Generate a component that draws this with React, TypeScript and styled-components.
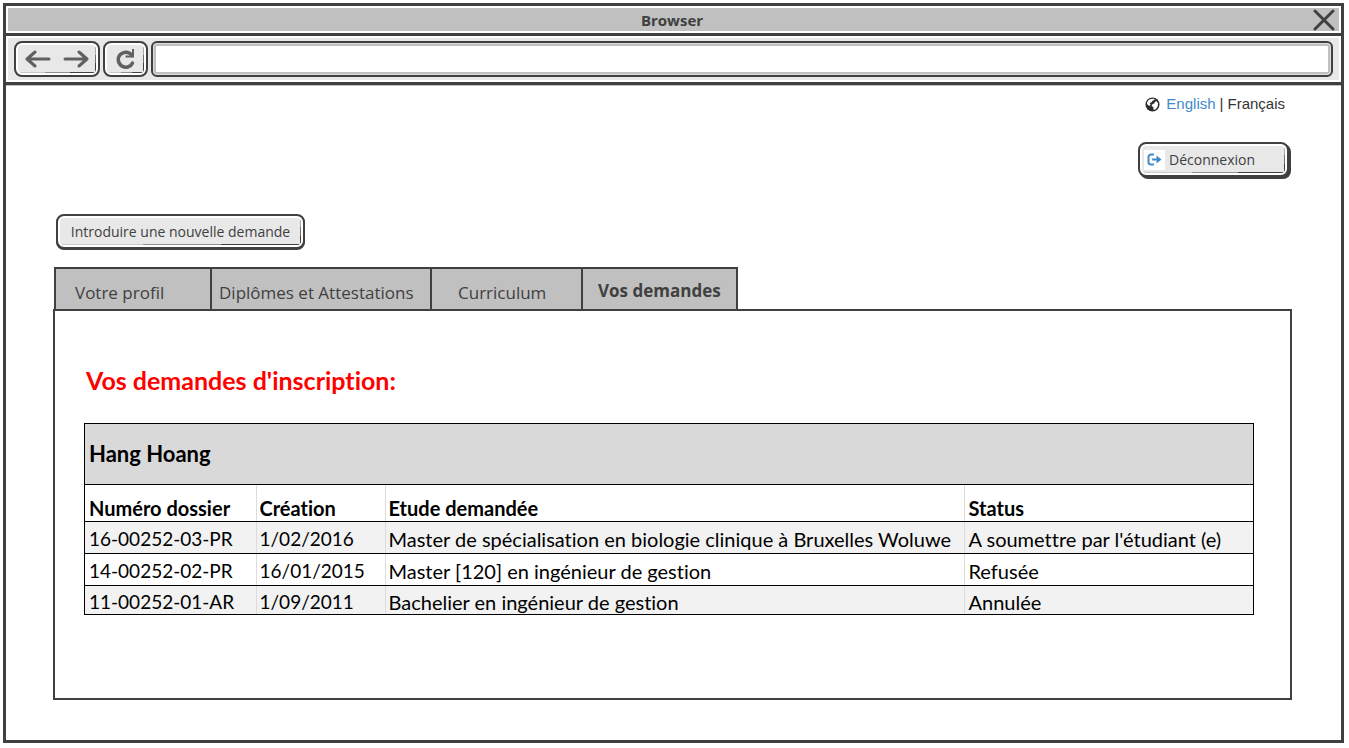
import React from "react";
import styled, { createGlobalStyle, css } from "styled-components";

const ink = "#404040";
const silver = "#c0c0c0";
const face = "#e8e8e8";
const sketchFont = `"Open Sans", "Noto Sans", sans-serif`;
const sheetFont = `Lato, "Open Sans", sans-serif`;

const GlobalStyle = createGlobalStyle`
  *, *::before, *::after { box-sizing: border-box; }
  body { margin: 0; background: #fff; color: ${ink}; font-family: ${sketchFont}; }
  button, input { font: inherit; color: inherit; }
`;

const Frame = styled.div`
  display: flex;
  flex-direction: column;
  min-height: calc(100vh - 8px);
  margin: 3px 5px 5px 3px;
  border: 3px solid ${ink};
  background: #fff;
`;

const TitleBar = styled.header`
  display: grid;
  grid-template-columns: 24px 1fr 24px;
  align-items: center;
  height: 27px;
  padding: 0 3px 0 0;
  border: 2px solid #fff;
  background: ${silver};
`;

const Title = styled.h1`
  grid-column: 2;
  margin: 0;
  text-align: center;
  font-size: 15px;
  line-height: 22px;
  font-weight: 700;
`;

const CloseButton = styled.button`
  display: grid;
  place-items: center;
  padding: 0;
  border: 0;
  background: none;
`;

const Toolbar = styled.div`
  display: flex;
  gap: 3px;
  padding: 5px 8px;
  height: 52px;
  border: solid ${ink};
  border-width: 3px 0;
  background: ${face};
  box-shadow: inset 0 0 0 2px #fff, 0 1px 0 ${silver};
`;

const sketchFace = css`
  border: 2px solid ${ink};
  border-radius: 8px;
  background:
    linear-gradient(90deg, #c8c8c8 34%, #909090 34% 67%, ${ink} 67%) 4px calc(100% - 2px) / calc(100% - 7px) 1px no-repeat,
    linear-gradient(#a8a8a8 30%, #707070 30% 65%, ${ink} 65%) calc(100% - 2px) 4px / 1px calc(100% - 7px) no-repeat,
    ${face};
  box-shadow: inset 0 0 0 2px #fff;
`;

const NavGroup = styled.div`
  ${sketchFace}
  display: flex;
  align-items: center;
  justify-content: center;
  gap: 12px;
  height: 36px;
  padding: 0 9px;
`;

const NavButton = styled.button`
  display: flex;
  padding: 0;
  border: 0;
  background: none;
`;

const AddressBar = styled.input`
  flex: 1;
  min-width: 0;
  height: 36px;
  padding: 0 12px;
  border: 2px solid ${ink};
  border-radius: 6px;
  background: #fff;
  box-shadow: inset 0 0 0 1px #dedede, inset 0 0 0 3px ${silver};
  outline: none;
`;

const Page = styled.main`
  flex: 1;
  display: flex;
  flex-direction: column;
  padding: 8px 49px 40px 47px;
`;

const LanguageBar = styled.nav`
  display: flex;
  align-items: center;
  align-self: flex-end;
  gap: 4px;
  margin-right: 7px;
  font-family: "Liberation Sans", Arial, sans-serif;
  font-size: 15px;
  line-height: 22px;
  color: #333;

  svg { margin-right: 2px; }
  a { color: #428bca; text-decoration: none; }
`;

const SketchButton = styled.button<{ $deep?: boolean }>`
  ${sketchFace}
  display: flex;
  align-items: center;
  height: 35px;
  padding: 0 6px;
  font-size: 14px;
  line-height: 20px;
  white-space: nowrap;
  box-shadow: inset 0 0 0 2px #fff, ${(p) => (p.$deep ? "2px 2px" : "0 1px")} 0 ${ink};
`;

const LogoutButton = styled(SketchButton)`
  align-self: flex-end;
  width: 151px;
  margin: 27px 3px 37px 0;
  padding: 0 4px;
  gap: 4px;
`;

const LogoutIcon = styled.span`
  display: grid;
  place-items: center;
  width: 21px;
  height: 20px;
  background: #fff;
`;

const NewRequestButton = styled(SketchButton)`
  align-self: flex-start;
  justify-content: center;
  width: 249px;
  margin: 0 0 18px 3px;
`;

const Tabs = styled.div`
  display: flex;
  align-self: flex-start;
  margin-left: 1px;
  border: solid ${ink};
  border-width: 2px 2px 0;
  background: ${silver};
`;

const Tab = styled.button<{ $width: number; $inset: number }>`
  width: ${(p) => p.$width}px;
  height: 40px;
  padding: 8px 0 0 ${(p) => p.$inset}px;
  border: 0;
  background: none;
  font-size: 17px;
  line-height: 24px;
  text-align: left;
  white-space: nowrap;

  & + & { border-left: 2px solid ${ink}; }
  &[aria-selected="true"] { font-weight: 700; padding-top: 3px; }
`;

const Panel = styled.section`
  flex: 1;
  padding: 53px 36px 80px 29px;
  border: 2px solid ${ink};
  font-family: ${sheetFont};
  font-variant-ligatures: none;
  color: #000;
`;

const Heading = styled.h2`
  margin: 0 0 27px 2px;
  font-size: 25px;
  line-height: 32px;
  font-weight: 700;
  color: #f00;
`;

const Sheet = styled.table`
  width: 100%;
  table-layout: fixed;
  border-collapse: collapse;
  border: 1px solid #000;
  font-size: 20px;
  line-height: 24px;
  text-align: left;
  white-space: nowrap;
`;

const Column = styled.col<{ $width?: number }>`
  width: ${(p) => (p.$width ? `${p.$width}px` : "auto")};
`;

const Row = styled.tr<{ $height: number; $shaded?: boolean }>`
  height: ${(p) => p.$height}px;
  border-bottom: 1px solid #000;
  background: ${(p) => (p.$shaded ? "#f2f2f2" : "#fff")};
`;

const Owner = styled.th`
  padding: 0 4px;
  background: #d9d9d9;
  font-size: 22px;
`;

const ColumnTitle = styled.th`
  padding: 9px 4px 0;
  & + & { box-shadow: inset 1px 0 #dcdcdc; }
`;

const Cell = styled.td<{ $numeric?: boolean; $ruled?: boolean }>`
  padding: 3px 4px 0;
  font-size: ${(p) => (p.$numeric ? 19 : 20)}px;
  & + & { box-shadow: ${(p) => (p.$ruled ? "inset 1px 0 #dcdcdc" : "none")}; }
`;

const requests = [
  { id: "16-00252-03-PR", created: "1/02/2016", study: "Master de spécialisation en biologie clinique à Bruxelles Woluwe", status: "A soumettre par l'étudiant (e)", height: 32 },
  { id: "14-00252-02-PR", created: "16/01/2015", study: "Master [120] en ingénieur de gestion", status: "Refusée", height: 32 },
  { id: "11-00252-01-AR", created: "1/09/2011", study: "Bachelier en ingénieur de gestion", status: "Annulée", height: 29 },
];

const tabs = [
  { label: "Votre profil", width: 154, inset: 19 },
  { label: "Diplômes et Attestations", width: 220, inset: 7 },
  { label: "Curriculum", width: 151, inset: 26 },
  { label: "Vos demandes", width: 155, inset: 15 },
];

const Arrow = ({ back }: { back?: boolean }) => (
  <svg width="26" height="20" viewBox="0 0 26 20" fill="none" stroke="#606060" strokeWidth="3" strokeLinecap="round" strokeLinejoin="round">
    <path d={back ? "M24 10H2M10 3L2 10L10 17" : "M2 10H24M16 3L24 10L16 17"} />
  </svg>
);

export default function App() {
  return (
    <>
      <GlobalStyle />
      <Frame>
        <TitleBar>
          <Title>Browser</Title>
          <CloseButton aria-label="Fermer">
            <svg width="22" height="22" viewBox="0 0 22 22" stroke={ink} strokeWidth="3" strokeLinecap="round">
              <path d="M2 2L20 20M20 2L2 20" />
            </svg>
          </CloseButton>
        </TitleBar>
        <Toolbar>
          <NavGroup>
            <NavButton aria-label="Page précédente"><Arrow back /></NavButton>
            <NavButton aria-label="Page suivante"><Arrow /></NavButton>
          </NavGroup>
          <NavGroup>
            <NavButton aria-label="Actualiser">
              <svg width="23" height="24" viewBox="0 0 23 24" fill="none" stroke="#606060">
                <path d="M18.500 16A7.500 7.500 0 1 1 18 8.500" strokeWidth="3.500" strokeLinecap="round" />
                <path d="M19 2V9.500H11.500" strokeWidth="2" />
              </svg>
            </NavButton>
          </NavGroup>
          <AddressBar type="text" aria-label="Adresse" />
        </Toolbar>
        <Page>
          <LanguageBar>
            <svg width="15" height="15" viewBox="0 0 16 16">
              <circle cx="8" cy="8" r="7.500" fill="#2b2b2b" />
              <path d="M2 6L3.500 3.500L6 2L9.500 1.800L10.500 3L8 4L7 5.500L5 6.500L6 8L4.500 9.500L2.500 8ZM10.500 5L12.500 4.500L14 7L13.500 10L11.500 13L9 13.500L9 11L7 9.500L8 7.500L10 7Z" fill="#fff" />
            </svg>
            <a href="#en">English</a>
            <span>|</span>
            <span>Français</span>
          </LanguageBar>
          <LogoutButton $deep>
            <LogoutIcon>
              <svg width="15" height="13" viewBox="0 0 15 13">
                <path d="M7 1.500H4A2.500 2.500 0 0 0 1.500 4V9A2.500 2.500 0 0 0 4 11.500H7" fill="none" stroke="#428bca" strokeWidth="2" />
                <path d="M5 5.500H9.500V2.500L14.500 6.500L9.500 10.500V7.500H5Z" fill="#428bca" />
              </svg>
            </LogoutIcon>
            Déconnexion
          </LogoutButton>
          <NewRequestButton>Introduire une nouvelle demande</NewRequestButton>
          <Tabs role="tablist">
            {tabs.map((tab, i) => (
              <Tab key={tab.label} role="tab" $width={tab.width} $inset={tab.inset} aria-selected={i === 3}>
                {tab.label}
              </Tab>
            ))}
          </Tabs>
          <Panel>
            <Heading>Vos demandes d'inscription:</Heading>
            <Sheet>
              <colgroup>
                <Column $width={171} />
                <Column $width={129} />
                <Column />
                <Column $width={289} />
              </colgroup>
              <thead>
                <Row $height={61}>
                  <Owner colSpan={4}>Hang Hoang</Owner>
                </Row>
                <Row $height={37}>
                  <ColumnTitle>Numéro dossier</ColumnTitle>
                  <ColumnTitle>Création</ColumnTitle>
                  <ColumnTitle>Etude demandée</ColumnTitle>
                  <ColumnTitle>Status</ColumnTitle>
                </Row>
              </thead>
              <tbody>
                {requests.map((r, i) => (
                  <Row key={r.id} $height={r.height} $shaded={i % 2 === 0}>
                    <Cell $numeric>{r.id}</Cell>
                    <Cell $numeric $ruled={i % 2 === 1}>{r.created}</Cell>
                    <Cell $ruled={i % 2 === 1}>{r.study}</Cell>
                    <Cell $ruled={i % 2 === 1}>{r.status}</Cell>
                  </Row>
                ))}
              </tbody>
            </Sheet>
          </Panel>
        </Page>
      </Frame>
    </>
  );
}
